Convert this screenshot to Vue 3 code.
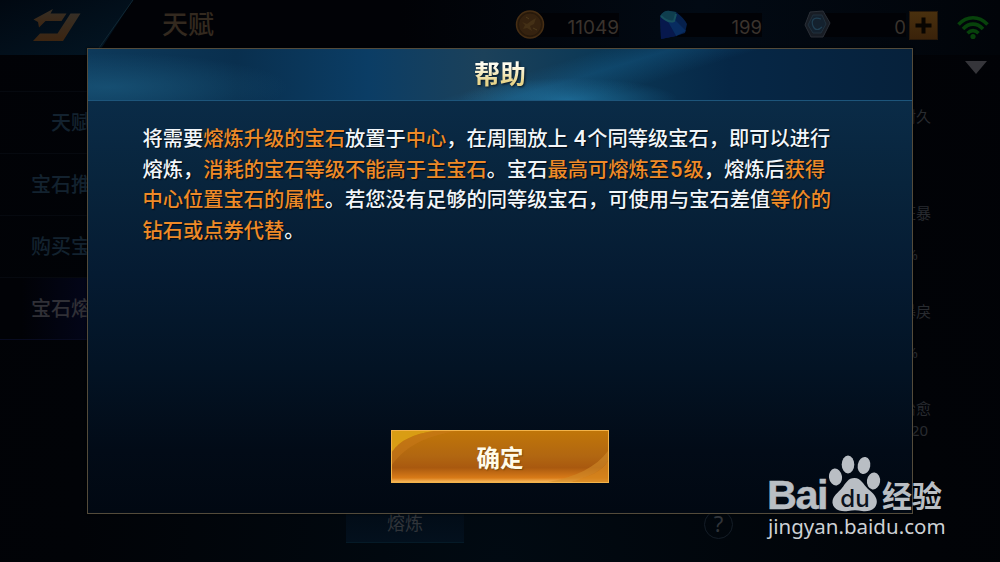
<template>
  <div class="game">
    <header class="topbar">
      <div class="back">
        <svg width="134" height="55" viewBox="0 0 134 55">
          <defs>
            <linearGradient id="corner" x1="0" y1="0" x2="1" y2="1">
              <stop offset="0" stop-color="#010811" />
              <stop offset="1" stop-color="#031624" />
            </linearGradient>
            <linearGradient id="arrow" x1="0" y1="0" x2="0" y2="1">
              <stop offset="0" stop-color="#362f26" />
              <stop offset="1" stop-color="#3c2511" />
            </linearGradient>
          </defs>
          <path d="M0 0H133L97 55H0Z" fill="url(#corner)" />
          <path d="M133 0L99 48" stroke="#102733" stroke-width="1" />
          <path d="M33.500 19.500L53 9L50.500 13.500H66.500L61.500 21H45.500L39 27.500L38 22Z" fill="url(#arrow)" />
          <path d="M70.500 13.500H80.500L63 41H33L40 33.500H57.500Z" fill="url(#arrow)" />
        </svg>
      </div>
      <h1 class="page-title">天赋</h1>
      <div class="wallet">
        <div class="coin gold">
          <svg width="30" height="32" viewBox="0 0 30 32">
            <circle cx="15" cy="15.500" r="13.500" fill="#2c1c0c" stroke="#462e14" stroke-width="1.500" />
            <circle cx="15" cy="15.500" r="11.500" fill="#35220f" stroke="#24180b" stroke-width=".8" />
            <path d="M7 13l5 2 4-3 5-3-2 6-4 2 2 5-5-3-4 1 2-4z" fill="#443016" />
            <path d="M11 8l3 2M18 19l4 2" stroke="#4d3a1b" />
          </svg>
          <span>11049</span>
        </div>
        <div class="coin diamond">
          <svg width="30" height="32" viewBox="0 0 30 32">
            <path d="M1 7Q5 1 11 2L17 3Q25 9 28 15L26 24L17 27L2 30Z" fill="#06204c" />
            <path d="M1 7Q5 1 11 2L17 3L16 11L9 13Z" fill="#0f3e4e" />
            <path d="M9 13L16 11L27 22L17 27Z" fill="#082c60" />
            <path d="M1 7L9 13L17 27L2 30Z" fill="#07184c" />
            <path d="M2 7Q9 14 15 12L17 5" stroke="#17505e" stroke-width="2" fill="none" />
          </svg>
          <span>199</span>
        </div>
        <div class="coin ticket">
          <svg width="30" height="32" viewBox="0 0 30 32">
            <path d="M6 3L19 2L26 14L19 28H7L1 16Z" fill="#181d25" stroke="#2a2f37" />
            <path d="M9 6H18L22 15L17 24H9L4 16Z" fill="#14212e" stroke="#20303d" />
            <path d="M17 10C9 7 7 12 9 17S15 21 18 18" stroke="#203f52" stroke-width="1.200" fill="none" />
          </svg>
          <span>0</span>
        </div>
        <button class="plus">
          <svg width="27" height="27" viewBox="0 0 27 27">
            <path d="M13.500 5.500V21.500M5.500 13.500H21.500" stroke="#080501" stroke-width="4" />
          </svg>
        </button>
      </div>
      <svg class="wifi" width="32" height="25" viewBox="0 0 32 25">
        <g fill="none" stroke="#07420b" stroke-width="3.600">
          <path d="M1.500 9.500C10 .5 22 .5 30.500 9.500" />
          <path d="M6 14C12 7.500 20 7.500 26 14" />
          <path d="M10.500 18.300C14 14.800 18 14.800 21.500 18.300" />
        </g>
        <circle cx="16" cy="21.500" r="2.600" fill="#07420b" />
      </svg>
    </header>

    <div class="content">
      <nav class="menu">
        <div v-for="item in menu" :key="item" class="menu-item" :class="{ active: item === current }">
          {{ item }}
        </div>
      </nav>
      <main class="board">
        <button class="smelt">熔炼</button>
        <span class="question">?</span>
      </main>
      <aside class="stats">
        <svg class="caret" width="22" height="14" viewBox="0 0 22 14">
          <path d="M0 0H22L11 13Z" fill="#35353a" />
        </svg>
        <div v-for="stat in stats" :key="stat.name" class="stat">
          <div class="stat-name">{{ stat.name }}</div>
          <div class="stat-value" :class="{ percent: stat.percent }">{{ stat.value }}</div>
        </div>
      </aside>
    </div>

    <!-- help dialog -->
    <section class="dialog">
      <div class="dialog-head">
        <h2>帮助</h2>
      </div>
      <div class="dialog-body">
        <div class="message">
          <p v-for="(line, i) in lines" :key="i">
            <span v-for="(part, j) in line" :key="j" :class="{ hot: part.hot, num: part.num }">{{ part.text }}</span>
          </p>
        </div>
        <button class="confirm">
          <svg class="confirm-art" width="216" height="51" viewBox="0 0 216 51" preserveAspectRatio="none">
            <path d="M0 0H42C22 3 8 9 0 21Z" fill="#d99d14" />
            <path d="M42 0H66C37 4 14 14 0 34V21C8 9 22 3 42 0Z" fill="#c9791a" opacity=".5" />
            <path d="M216 20C204 36 184 46 156 51H178C198 46 210 40 216 30Z" fill="#d18a28" opacity=".6" />
            <path d="M216 30C210 40 198 46 178 51H216Z" fill="#d4851d" opacity=".8" />
          </svg>
          <span>确定</span>
        </button>
      </div>
    </section>

    <!-- watermark -->
    <div class="mark">
      <div class="mark-top">
        <span class="bai">Bai</span>
        <div class="paw">
          <svg width="54" height="58" viewBox="0 0 54 58">
            <g fill="#b9bec4">
              <ellipse cx="7.500" cy="22" rx="6.500" ry="8.500" transform="rotate(-8 7.500 22)" />
              <ellipse cx="20" cy="9.500" rx="6.300" ry="9" />
              <ellipse cx="36" cy="10.500" rx="6.300" ry="8.600" transform="rotate(10 36 10.500)" />
              <ellipse cx="45.500" cy="26" rx="6.600" ry="8.500" transform="rotate(8 45.500 26)" />
              <path d="M26.500 23C33 23 35 29 40 34C46 39 50 43 48.500 49C47 55 40 57 34 56C29 55 25 55 20 56C13 57 5.500 55 4.500 48C4 41 10 38 14 33C18 28 20 23 26.500 23Z" />
            </g>
          </svg>
          <span>du</span>
        </div>
        <span class="jy">经验</span>
      </div>
      <div class="mark-url">jingyan.baidu.com</div>
    </div>
  </div>
</template>

<script setup>
import { ref } from "vue"

const menu = ["天赋", "宝石推荐", "购买宝石", "宝石熔炼"]
const current = ref("宝石熔炼")

const stats = [
  { name: "耐久", value: "" },
  { name: "狂暴", value: "1%", percent: true },
  { name: "暴戾", value: "1%", percent: true },
  { name: "治愈", value: "20" }
]

const lines = [
  [
    { text: "将需要" },
    { text: "熔炼升级的宝石", hot: true },
    { text: "放置于" },
    { text: "中心", hot: true },
    { text: "，在周围放上 " },
    { text: "4", num: true },
    { text: "个同等级宝石，即可以进行" }
  ],
  [
    { text: "熔炼，" },
    { text: "消耗的宝石等级不能高于主宝石", hot: true },
    { text: "。宝石" },
    { text: "最高可熔炼至", hot: true },
    { text: "5", hot: true, num: true },
    { text: "级", hot: true },
    { text: "，熔炼后" },
    { text: "获得", hot: true }
  ],
  [
    { text: "中心位置宝石的属性", hot: true },
    { text: "。若您没有足够的同等级宝石，可使用与宝石差值" },
    { text: "等价的", hot: true }
  ],
  [
    { text: "钻石或点券代替", hot: true },
    { text: "。" }
  ]
]
</script>

<style>
body {
  margin: 0;
  background: #010206;
}
</style>

<style scoped>
.game {
  position: relative;
  width: 1000px;
  height: 562px;
  overflow: hidden;
  background: radial-gradient(ellipse at 50% 100%, #010a12 0%, #010307 60%, #010206 100%);
  font-family: "Noto Sans", "Noto Sans CJK SC", sans-serif;
}

h1, h2, p {
  margin: 0;
}

button {
  border: none;
  padding: 0;
  font-family: inherit;
}

.topbar {
  display: flex;
  height: 55px;
  background: linear-gradient(90deg, #010206 40%, #020a14 70%, #010409);
}

.topbar > *, .coin {
  flex-shrink: 0;
}

.back {
  width: 162px;
  height: 55px;
}

.page-title {
  width: 352px;
  font-family: "Noto Sans CJK SC", sans-serif;
  font-size: 26px;
  line-height: 46px;
  font-weight: 500;
  color: #33291f;
}

.wallet {
  display: flex;
  align-items: center;
  height: 50px;
}

.coin {
  display: flex;
  align-items: center;
  justify-content: space-between;
  height: 24px;
  background: linear-gradient(#010206, #010206) 18px 0 no-repeat;
  color: #3a332d;
  font-family: Inter, "Noto Sans", sans-serif;
  font-size: 18.500px;
}

.coin span {
  padding-top: 4px;
}

.gold {
  width: 104px;
  margin: 0 40px 0 1px;
}

.gold span {
  font-size: 19px;
}

.diamond {
  width: 103px;
  margin-right: 42px;
}

.ticket {
  width: 102px;
  margin-right: 4px;
}

.plus {
  width: 27px;
  height: 27px;
  background: linear-gradient(#49300e, #3a220a);
  outline: 1px solid #28190a;
}

.wifi {
  margin: 15px 0 0 20px;
}

.plus svg {
  display: block;
}

.content {
  display: flex;
  height: 507px;
}

.menu {
  width: 142px;
  padding-top: 36px;
}

.menu-item {
  height: 61px;
  border-top: 1px solid #06090f;
  font-family: "Noto Sans CJK SC", sans-serif;
  font-size: 20px;
  font-weight: 500;
  line-height: 60px;
  text-align: center;
  color: #13222f;
}

.menu-item.active {
  border-bottom: 1px solid #080b20;
  background: linear-gradient(90deg, #010206 15%, #03061c 70%);
  color: #303036;
}

.board {
  display: flex;
  align-items: flex-end;
  width: 755px;
}

.smelt {
  width: 118px;
  height: 38px;
  margin: 0 0 19px 204px;
  background: linear-gradient(#020b15, #03101d);
  border-bottom: 1px solid #051a27;
  font-size: 18px;
  line-height: 37px;
  color: #303439;
}

.question {
  box-sizing: border-box;
  width: 29px;
  height: 29px;
  margin: 0 0 23px 240px;
  border: 1.500px solid #141d27;
  border-radius: 50%;
  color: #303439;
  font-size: 22px;
  line-height: 25px;
  text-align: center;
}

.stats {
  width: 103px;
}

.caret {
  display: block;
  margin: 6px 0 30px 68px;
}

.stat {
  height: 97.300px;
  padding-left: 4px;
  color: #282b30;
  font-size: 15px;
}

.stat-name {
  height: 22px;
  line-height: 22px;
}

.stat-value {
  padding-left: 10px;
  line-height: 23px;
}

.stat-value.percent {
  padding: 19px 0 0;
  margin-left: -4px;
}

.dialog {
  position: absolute;
  left: 87px;
  top: 48px;
  box-sizing: border-box;
  width: 826px;
  height: 466px;
  border: 1.500px solid #534b3b;
  background: #010914;
  box-shadow: 0 0 2px #000;
}

.dialog-head {
  height: 51px;
  border-bottom: 1px solid #1d557b;
  background:
    radial-gradient(ellipse 110px 22px at 480px 51px, rgba(34, 125, 174, .65), transparent),
    radial-gradient(ellipse 180px 34px at 20px 38px, rgba(26, 88, 124, .7), transparent),
    linear-gradient(163deg, transparent 52%, rgba(23, 100, 148, .35) 59%, transparent 68%),
    linear-gradient(90deg, #0d395a 0%, #092f4e 18%, #0b3d65 34%, #1c415a 48%, #0b3856 62%, #062746 78%, #06213b 100%);
}

.dialog-head h2 {
  font-family: "Noto Sans CJK SC", sans-serif;
  font-size: 26px;
  line-height: 47px;
  font-weight: 700;
  text-align: center;
  color: transparent;
  background: linear-gradient(#fffdf0 35%, #e8d58b 70%);
  background-clip: text;
  filter: drop-shadow(1px 1px 1px #061523);
}

.dialog-body {
  display: flex;
  flex-direction: column;
  align-items: center;
  justify-content: space-between;
  height: 411px;
  box-sizing: border-box;
  padding: 23px 0 29px;
  background: linear-gradient(#0a2b47 0%, #08243c 20%, #051b32 42%, #031324 65%, #020b17 85%, #010812 100%);
}

.message {
  width: 715px;
  font-family: Roboto, "Noto Sans CJK SC", sans-serif;
  font-size: 20.250px;
  font-weight: 500;
  color: #f2f6fa;
  text-shadow: 1px 1px 1px #020b14;
}

.message p {
  height: 30.500px;
  line-height: 30.500px;
  white-space: nowrap;
}

.hot {
  color: #ee8a28;
}

.num {
  margin: 0 .8px 0 1px;
  font-size: 22px;
  line-height: 1;
}

.confirm {
  display: grid;
  place-items: center;
  box-sizing: border-box;
  width: 218px;
  height: 53px;
  border: 1px solid #f3b34a;
  background: linear-gradient(#c07609, #b16611 50%, #a9590f 72%, #d97b18 92%, #f5b65a);
}

.confirm > * {
  grid-area: 1 / 1;
}

.confirm span {
  z-index: 1;
  font-size: 23.500px;
  font-weight: 700;
  color: #fffbe9;
  text-shadow: 1px 1px 1px #7c4a08;
}

.mark {
  position: absolute;
  left: 767px;
  top: 455px;
  width: 180px;
  color: #b9bec4;
}

.mark-top {
  display: flex;
  align-items: flex-start;
  height: 58px;
}

.bai {
  width: 61px;
  margin-top: 21px;
  font-family: "Liberation Sans", sans-serif;
  font-size: 41.500px;
  line-height: 37px;
  font-weight: 700;
  letter-spacing: -1.500px;
  -webkit-text-stroke: .5px #b9bec4;
}

.paw {
  display: grid;
  width: 54px;
  height: 58px;
}

.paw > * {
  grid-area: 1 / 1;
}

.paw span {
  align-self: end;
  margin-bottom: 1px;
  font-family: Inter, Roboto, sans-serif;
  font-size: 24px;
  line-height: 27px;
  font-weight: 500;
  text-align: center;
  color: #0b121c;
}

.jy {
  margin-top: 24px;
  font-family: "Noto Sans CJK SC", sans-serif;
  font-size: 30px;
  line-height: 30px;
  font-weight: 700;
  white-space: nowrap;
}

.mark-url {
  padding-left: 1px;
  font-size: 20.500px;
  line-height: 26px;
  color: #cdd1d5;
}
</style>
